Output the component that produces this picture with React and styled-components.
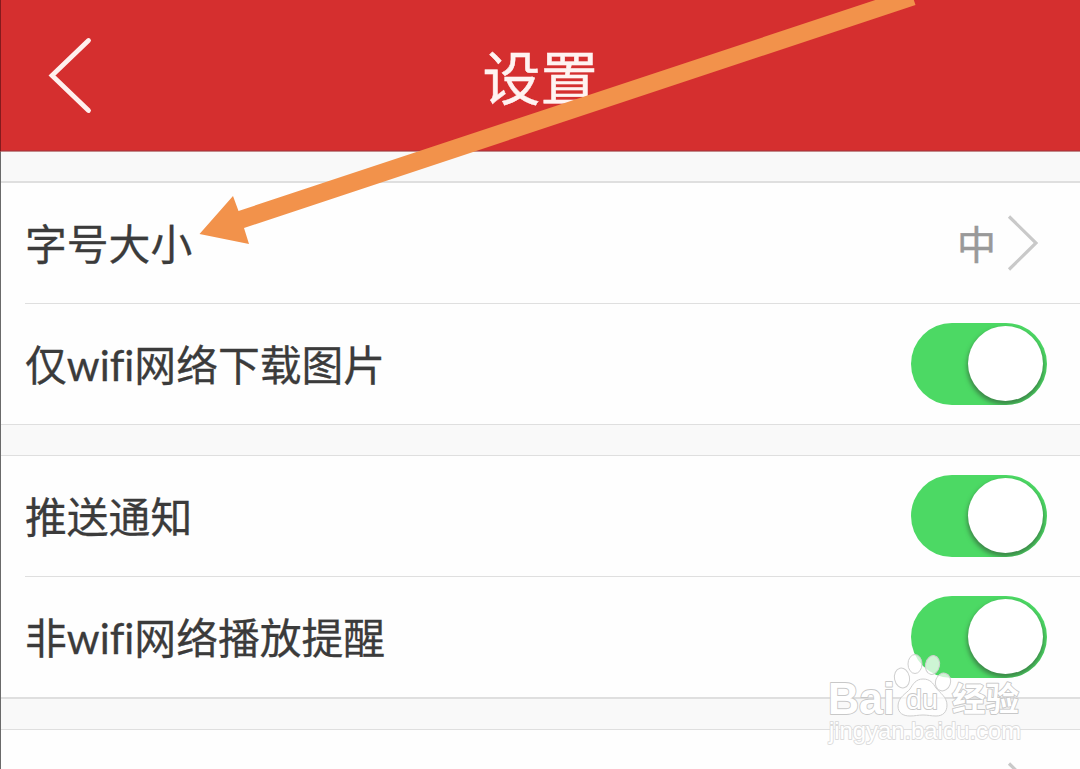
import React from 'react';
import styled, { createGlobalStyle } from 'styled-components';

const GlobalStyle = createGlobalStyle`
  * { box-sizing: border-box; }
  body { margin: 0; overflow: hidden; background: #fefefe; }
`;

const Screen = styled.div`
  position: relative;
  width: 1080px; height: 769px;
  overflow: hidden;
  display: flex; flex-direction: column;
  background-color: #fefefe;
  color: #3b3b3b;
  font-family: Lato, 'Noto Sans CJK SC', sans-serif;
  box-shadow: inset 1px 0 0 #6a6a6a;
`;

const Header = styled.header`
  height: 152px; flex-shrink: 0;
  display: grid;
  grid-template-columns: 180px 1fr 180px;
  align-items: center;
  background-color: #d52f2f;
  border-left: 1px solid #861a1d;
  border-bottom: 1px solid #c28a8a;
  box-shadow: inset 0 -1px 0 #b93238;
`;

const BackButton = styled.button`
  width: 60px; height: 90px;
  margin: -2px 0 0 38px; padding: 0;
  border: none; background: none;
  cursor: pointer;
`;

const Title = styled.h1`
  margin: 0 0 -5px;
  font-size: 58px; line-height: 80px; font-weight: 400;
  text-align: center;
  color: #fff3f1;
  -webkit-text-stroke: 0.5px #fff3f1;
`;

const Gap = styled.div`
  height: ${({ $height }) => $height}px; flex-shrink: 0;
  margin-left: 1px;
  background-color: #f9f9f9;
`;

const Group = styled.section`
  flex-shrink: 0;
  margin-left: 1px;
  border-top: ${({ $top = 1 }) => $top}px solid #dfdfdf;
  border-bottom: ${({ $bottom = 1 }) => $bottom}px solid #dfdfdf;
`;

const Row = styled.div`
  height: 120px;
  margin-left: 24px; padding-right: 33px;
  display: flex; align-items: center; justify-content: space-between;

  & + & {
    height: 121px;
    border-top: 1px solid #dfdfdf;
  }
`;

const Label = styled.span`
  padding-top: 2px;
  font-size: 41.8px; line-height: 60px;
  white-space: nowrap;
  font-variant-ligatures: none;
  -webkit-text-stroke: 0.3px #3b3b3b;
`;

const Value = styled.span`
  display: flex; align-items: center; gap: 11px;
  margin-right: 9px;
  color: #999;
`;

const ValueText = styled.span`
  padding-top: 2px;
  font-size: 39px; line-height: 60px;
  -webkit-text-stroke: 0.5px #999;
`;

const Switch = styled.button`
  width: 136px; height: 82px;
  padding: 3px 4px 4px;
  display: flex; justify-content: flex-end;
  border: none; border-radius: 41px;
  background-color: #4cd964;
  overflow: hidden;
`;

const Knob = styled.span`
  width: 75px; height: 75px;
  border-radius: 50%;
  background-color: #fff;
  box-shadow: 0 3px 4px 1px rgba(50, 85, 55, 0.6);
`;

const Arrow = styled.svg`
  position: absolute; top: 0; left: 0;
  pointer-events: none;
`;

const Watermark = styled.svg`
  position: absolute; left: 820px; top: 645px;
  pointer-events: none;
`;

const Chevron = () => (
  <svg width="31" height="58" viewBox="0 0 31 58" fill="none">
    <path d="M2 2.5 29 29 2 55.5" stroke="#c9c9c9" strokeWidth="3.2" />
  </svg>
);

const Toggle = () => (
  <Switch role="switch" aria-checked="true">
    <Knob />
  </Switch>
);

const BaiduMark = () => (
  <Watermark width="220" height="110" viewBox="0 0 220 110">
    <g fill="#fff" fillOpacity="0.72" stroke="#cfcfcf" strokeWidth="1">
      <ellipse cx="82" cy="33" rx="7.5" ry="10" transform="rotate(-12 82 33)" />
      <ellipse cx="95" cy="19" rx="7" ry="9.5" />
      <ellipse cx="112.5" cy="20" rx="7" ry="9.5" transform="rotate(12 112.5 20)" />
      <ellipse cx="123" cy="37" rx="7.5" ry="9" transform="rotate(18 123 37)" />
      <path d="M103 34c-7 0-10 5-13 10-3 4-12 8-12 17 0 7 5 10 12 10 5 0 8-1 13-1s8 1 13 1c7 0 11-4 11-11 0-8-7-12-11-17-3-5-6-9-13-9z" />
    </g>
    <g fill="#fff" stroke="#c8c8c8" strokeWidth="1.8" paintOrder="stroke" strokeLinejoin="round" fontFamily="'Liberation Sans', sans-serif">
      <text x="8" y="69" fontSize="45" fontWeight="700" textLength="67" lengthAdjust="spacingAndGlyphs">Bai</text>
      <text x="86" y="64" fontSize="27" textLength="32" lengthAdjust="spacingAndGlyphs">du</text>
      <text x="132" y="66" fontSize="33" fontWeight="700" textLength="67" lengthAdjust="spacingAndGlyphs" fontFamily="'Noto Sans CJK SC', sans-serif">经验</text>
      <text x="9" y="94" fontSize="24" stroke="#dcdcdc" textLength="192" lengthAdjust="spacingAndGlyphs">jingyan.baidu.com</text>
    </g>
  </Watermark>
);

const App = () => (
  <>
    <GlobalStyle />
    <Screen>
      <Header>
        <BackButton aria-label="返回">
          <svg width="60" height="90" viewBox="0 0 60 90" fill="none">
            <path d="M49.5 10.5 13 45.5l36.5 35" stroke="#fff0ee" strokeWidth="4.8" strokeLinecap="round" />
          </svg>
        </BackButton>
        <Title>设置</Title>
      </Header>
      <Gap $height={29} />
      <Group $top={2}>
        <Row>
          <Label>字号大小</Label>
          <Value>
            <ValueText>中</ValueText>
            <Chevron />
          </Value>
        </Row>
        <Row>
          <Label>仅wifi网络下载图片</Label>
          <Toggle />
        </Row>
      </Group>
      <Gap $height={30} />
      <Group $bottom={2}>
        <Row>
          <Label>推送通知</Label>
          <Toggle />
        </Row>
        <Row>
          <Label>非wifi网络播放提醒</Label>
          <Toggle />
        </Row>
      </Group>
      <Gap $height={30} />
      <Group>
        <Row>
          <Label />
          <Value>
            <Chevron />
          </Value>
        </Row>
      </Group>
      <Arrow width="1080" height="260" viewBox="0 0 1080 260">
        <path d="M199.5 234 233 196l5.5 15L910-11.5 915.5 5 244 228l5 16z" fill="#f2924b" />
      </Arrow>
      <BaiduMark />
    </Screen>
  </>
);

export default App;
